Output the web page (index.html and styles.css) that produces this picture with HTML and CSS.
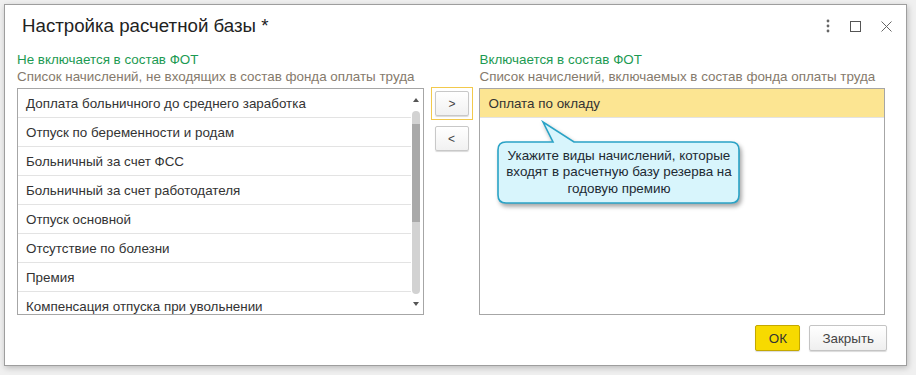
FILE: index.html
```html
<!DOCTYPE html>
<html lang="ru">
<head>
  <meta charset="UTF-8" />
  <title>Настройка расчетной базы</title>
  <link rel="stylesheet" href="styles.css">
</head>
<body>
  <div class="window">
    <!-- Title bar -->
    <div class="titlebar">
      <h1>Настройка расчетной базы *</h1>
      <div class="win-tools">
        <svg width="4" height="14" viewBox="0 0 4 14"><circle cx="2" cy="2" r="1.4" fill="#666"/><circle cx="2" cy="7" r="1.4" fill="#666"/><circle cx="2" cy="12" r="1.4" fill="#666"/></svg>
        <svg width="11" height="11" viewBox="0 0 11 11"><rect x="0.5" y="0.5" width="10" height="10" fill="none" stroke="#555" stroke-width="1"/></svg>
        <svg width="11" height="11" viewBox="0 0 11 11"><path d="M0.5 0.5 L10.5 10.5 M10.5 0.5 L0.5 10.5" stroke="#666" stroke-width="1"/></svg>
      </div>
    </div>

    <!-- Lists -->
    <div class="content">
      <div class="column">
        <div class="label">Не включается в состав ФОТ</div>
        <div class="hint">Список начислений, не входящих в состав фонда оплаты труда</div>
        <div class="list">
          <div class="rows">
            <div class="row">Доплата больничного до среднего заработка</div>
            <div class="row">Отпуск по беременности и родам</div>
            <div class="row">Больничный за счет ФСС</div>
            <div class="row">Больничный за счет работодателя</div>
            <div class="row">Отпуск основной</div>
            <div class="row">Отсутствие по болезни</div>
            <div class="row">Премия</div>
            <div class="row">Компенсация отпуска при увольнении</div>
          </div>
          <div class="scrollbar">
            <span class="arrow up"></span>
            <div class="track"><div class="thumb"></div></div>
            <span class="arrow down"></span>
          </div>
        </div>
      </div>

      <div class="movers">
        <div class="focus"><button class="move">&gt;</button></div>
        <button class="move">&lt;</button>
      </div>

      <div class="column">
        <div class="label">Включается в состав ФОТ</div>
        <div class="hint">Список начислений, включаемых в состав фонда оплаты труда</div>
        <div class="list right-list">
          <div class="rows">
            <div class="row selected">Оплата по окладу</div>
          </div>
          <!-- Callout -->
          <svg class="callout-shape" width="280" height="130" viewBox="0 0 280 130">
            <path d="M26 53 H73 L63 33 L94 53 H251 Q259 53 259 61 V106 Q259 114 251 114 H26 Q18 114 18 106 V61 Q18 53 26 53 Z" fill="#d8f5fc" stroke="#2aa3c6" stroke-width="1.6"/>
          </svg>
          <div class="callout-text">Укажите виды начислений, которые входят в расчетную базу резерва на годовую премию</div>
        </div>
      </div>
    </div>

    <!-- Footer -->
    <div class="footer">
      <button class="btn btn-ok">ОК</button>
      <button class="btn">Закрыть</button>
    </div>
  </div>
</body>
</html>
```

FILE: styles.css
```css
* {
  margin: 0;
  padding: 0;
  box-sizing: border-box;
}

html, body {
  height: 100%;
  font-family: 'Liberation Sans', Arial, sans-serif;
  color: #333;
  background: #f0f0f0;
  overflow: hidden;
}

.window {
  margin: 4px 0 0 4px;
  width: 903px;
  height: 362px;
  background: #fff;
  border: 1px solid #9e9e9e;
  box-shadow: 1px 2px 6px rgba(0, 0, 0, 0.22);
  display: flex;
  flex-direction: column;
}

.titlebar {
  height: 42px;
  display: flex;
  align-items: center;
  justify-content: space-between;
  padding: 0 14px 0 17px;
}

.titlebar h1 {
  font-size: 18.7px;
  font-weight: normal;
  color: #222;
}

.win-tools {
  display: flex;
  align-items: center;
  gap: 20px;
}

.content {
  display: flex;
  padding: 4px 20px 0 12px;
  height: 273px;
}

.column {
  display: flex;
  flex-direction: column;
  width: 407px;
}

.label {
  font-size: 13.4px;
  color: #1c9a52;
  line-height: 17px;
  height: 17px;
}

.hint {
  font-size: 13.4px;
  color: #857a6c;
  line-height: 17px;
  height: 17px;
  margin-bottom: 3px;
}

.list {
  position: relative;
  height: 227px;
  border: 1px solid #a6a6a6;
  display: flex;
  overflow: hidden;
}

.rows {
  flex: 1;
}

.row {
  height: 29px;
  line-height: 29px;
  font-size: 13.4px;
  color: #333;
  padding-left: 8px;
  border-bottom: 1px solid #e3e3e3;
  white-space: nowrap;
}

.row.selected {
  background: #fce592;
}

.scrollbar {
  width: 12px;
  display: flex;
  flex-direction: column;
  align-items: center;
  padding: 0 3px 0 0;
}

.arrow {
  width: 0;
  height: 0;
  border-left: 3px solid transparent;
  border-right: 3px solid transparent;
  margin-left: 1px;
}

.arrow.up {
  border-bottom: 4px solid #555;
  margin-top: 9px;
}

.arrow.down {
  border-top: 4px solid #555;
  margin-top: 8px;
}

.track {
  width: 8px;
  height: 183px;
  margin-top: 9px;
  margin-left: 1px;
  background: #d2d2d2;
  border-radius: 4px;
  padding-top: 13px;
}

.thumb {
  height: 98px;
  background: #a9a9a9;
}

.movers {
  width: 56px;
  display: flex;
  flex-direction: column;
  align-items: center;
  padding-top: 36px;
  gap: 6px;
}

.focus {
  border: 1px solid #f2c94c;
  padding: 3px;
  margin-left: 1px;
}

.move {
  width: 34px;
  height: 25px;
  font-family: 'Liberation Sans', Arial, sans-serif;
  font-size: 12px;
  color: #444;
  background: linear-gradient(#ffffff, #f1f1f1);
  border: 1px solid #c8c8c8;
  border-radius: 2px;
  box-shadow: 0 1px 1px rgba(0, 0, 0, 0.15);
}

.right-list {
  width: 406px;
}

.callout-shape {
  position: absolute;
  left: 0;
  top: 0;
  filter: drop-shadow(2px 3px 2px rgba(0, 0, 0, 0.35));
}

.callout-text {
  position: absolute;
  left: 18px;
  top: 53px;
  width: 241px;
  height: 61px;
  display: flex;
  align-items: center;
  justify-content: center;
  text-align: center;
  font-size: 13.4px;
  line-height: 16.5px;
  color: #1d2a33;
  padding: 0 5px;
}

.footer {
  display: flex;
  justify-content: flex-end;
  gap: 9px;
  padding: 5px 19px 0 0;
}

.btn {
  height: 26px;
  font-family: 'Liberation Sans', Arial, sans-serif;
  font-size: 13.4px;
  color: #444;
  padding: 0 12px;
  background: linear-gradient(#ffffff, #efefef);
  border: 1px solid #c4c4c4;
  border-radius: 2px;
  box-shadow: 0 1px 1px rgba(0, 0, 0, 0.15);
  min-width: 77px;
}

.btn-ok {
  min-width: 45px;
  width: 45px;
  padding: 0;
  background: #f7da00;
  border-color: #c4a800;
  color: #333;
}
```
